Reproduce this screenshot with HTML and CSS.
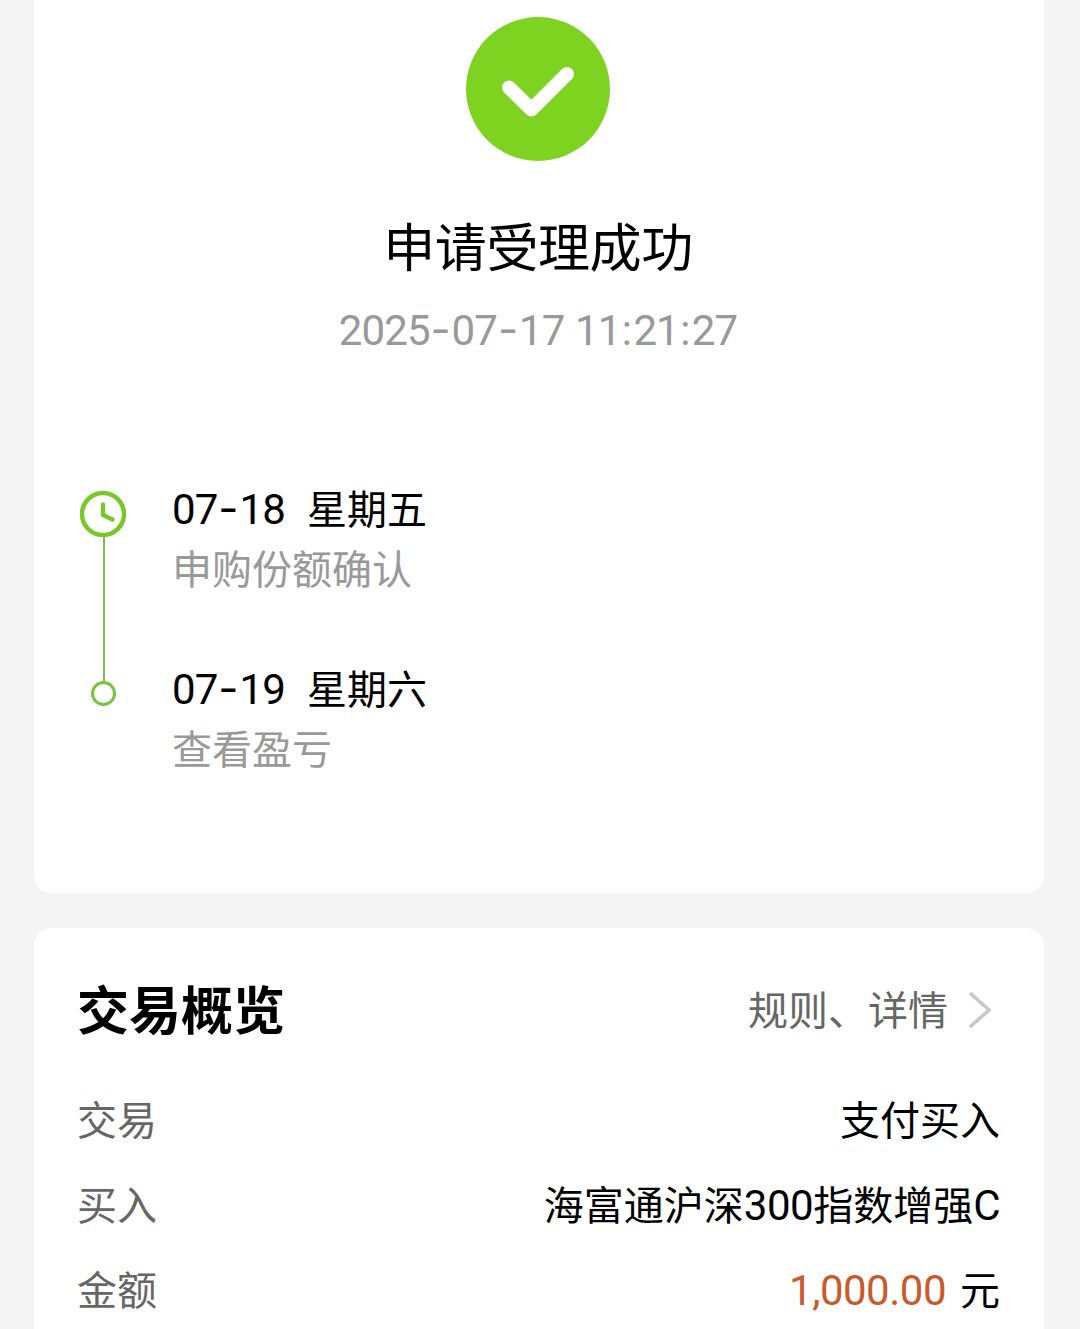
FILE: index.html
```
<!DOCTYPE html>
<html lang="zh-CN">
	<head>
		<meta charset="utf-8">
		<title>交易结果</title>
		<link rel="stylesheet" href="styles.css">
	</head>

	<body>
		<div class="card result">
			<svg class="ok" viewBox="0 0 144 144">
				<circle cx="72" cy="72" r="72" fill="#7ed321" />
				<path d="M43 70.500L65.500 92.500L101 57" fill="none" stroke="#fff" stroke-width="14" stroke-linecap="round" stroke-linejoin="round" />
			</svg>
			<div class="title">申请受理成功</div>
			<div class="time">2025<span class="dash">-</span>07<span class="dash">-</span>17 <span class="clocktime">11<span class="colon">:</span>21<span class="colon">:</span>27</span></div>

			<div class="steps">
				<div class="rail">
					<svg class="clock" viewBox="0 0 46 46">
						<circle cx="23" cy="23" r="21" fill="none" stroke="#78c828" stroke-width="4.400" />
						<path d="M23 13.500V24L32.500 28.500" fill="none" stroke="#78c828" stroke-width="4.400" stroke-linecap="round" stroke-linejoin="round" />
					</svg>
					<div class="line"></div>
					<div class="dot"></div>
				</div>
				<div class="list">
					<div class="step">
						<div class="day"><span class="date">07<span class="dash">-</span>18</span><span>星期五</span></div>
						<div class="desc">申购份额确认</div>
					</div>
					<div class="step">
						<div class="day"><span class="date">07<span class="dash">-</span>19</span><span>星期六</span></div>
						<div class="desc">查看盈亏</div>
					</div>
				</div>
			</div>
		</div>

		<div class="card overview">
			<div class="head">
				<div class="name">交易概览</div>
				<div class="more">
					<span>规则、详情</span>
					<svg class="arrow" viewBox="0 0 24 38">
						<path d="M2 2L21 19L2 36" fill="none" stroke="#c8c8c8" stroke-width="3.600" />
					</svg>
				</div>
			</div>
			<div class="row">
				<div class="label">交易</div>
				<div class="value">支付买入</div>
			</div>
			<div class="row">
				<div class="label">买入</div>
				<div class="value">海富通沪深<span class="num">300</span>指数增强<span class="num">C</span></div>
			</div>
			<div class="row">
				<div class="label">金额</div>
				<div class="value"><span class="money">1,000.00</span>元</div>
			</div>
		</div>
	</body>
</html>
```

FILE: styles.css
```
* {
	box-sizing: border-box;
}

html,
body {
	margin: 0;
	height: 1329px;
	overflow: hidden;
}

body {
	padding: 0 36px 0 34px;
	background-color: #f4f4f4;
	font-family: "Noto Sans CJK SC", sans-serif;
	font-size: 40px;
	color: #000;
	white-space: nowrap;
}

.card {
	background-color: #fff;
	border-radius: 18px;
}

.result {
	display: flex;
	flex-direction: column;
	align-items: center;
	height: 893px;
	padding: 17px 44px 0 42px;
	border-radius: 0 0 18px 18px;
}

.ok {
	width: 144px;
	height: 144px;
}

.title {
	margin-top: 51px;
	font-size: 52px;
	line-height: 66px;
	letter-spacing: -0.4px;
}

.time {
	margin-top: 23px;
	font-family: Roboto, sans-serif;
	font-size: 42px;
	line-height: 60px;
	letter-spacing: -0.9px;
	color: #999;
}

.clocktime {
	margin-left: 1px;
}

.dash {
	display: inline-block;
	width: 22px;
	font-family: Inter, sans-serif;
	font-size: 44px;
	line-height: 1;
	letter-spacing: 0;
	text-align: center;
}

.colon {
	display: inline-block;
	width: 13px;
	letter-spacing: 0;
	text-align: center;
}

.steps {
	display: flex;
	align-self: stretch;
	margin-top: 117px;
}

.rail {
	display: flex;
	flex-direction: column;
	align-items: center;
	width: 54px;
	padding-top: 13px;
}

.clock {
	width: 46px;
	height: 46px;
}

.line {
	width: 2px;
	height: 144px;
	margin-left: 1px;
	background-color: #80b858;
}

.dot {
	width: 25px;
	height: 25px;
	border: 3px solid #7ac13c;
	border-radius: 50%;
}

.list {
	margin-left: 42px;
}

.step {
	height: 180px;
}

.day {
	display: flex;
	height: 60px;
	line-height: 58px;
}

.date {
	width: 135px;
	font-family: Roboto, sans-serif;
	font-size: 42px;
	line-height: 63px;
	letter-spacing: -0.9px;
}

.desc {
	line-height: 58px;
	color: #999;
}

.overview {
	height: 440px;
	margin-top: 35px;
	padding: 40px 44px 0 43px;
}

.head {
	display: flex;
	justify-content: space-between;
	align-items: center;
	height: 84px;
	padding-right: 8px;
}

.name {
	font-size: 52px;
	font-weight: 700;
	line-height: 80px;
	padding-bottom: 4px;
}

.more {
	display: flex;
	align-items: center;
	color: #666;
}

.more span {
	padding-bottom: 4px;
	line-height: 60px;
}

.arrow {
	width: 24px;
	height: 38px;
	margin-left: 20px;
}

.row {
	display: flex;
	justify-content: space-between;
	height: 85px;
	line-height: 85px;
}

.head + .row {
	margin-top: 24px;
}

.label {
	color: #666;
}

.num,
.money {
	font-family: Roboto, sans-serif;
	font-size: 42px;
	line-height: 1;
	letter-spacing: -0.5px;
}

.money {
	margin-right: 14px;
	color: #c95a2c;
}
```
